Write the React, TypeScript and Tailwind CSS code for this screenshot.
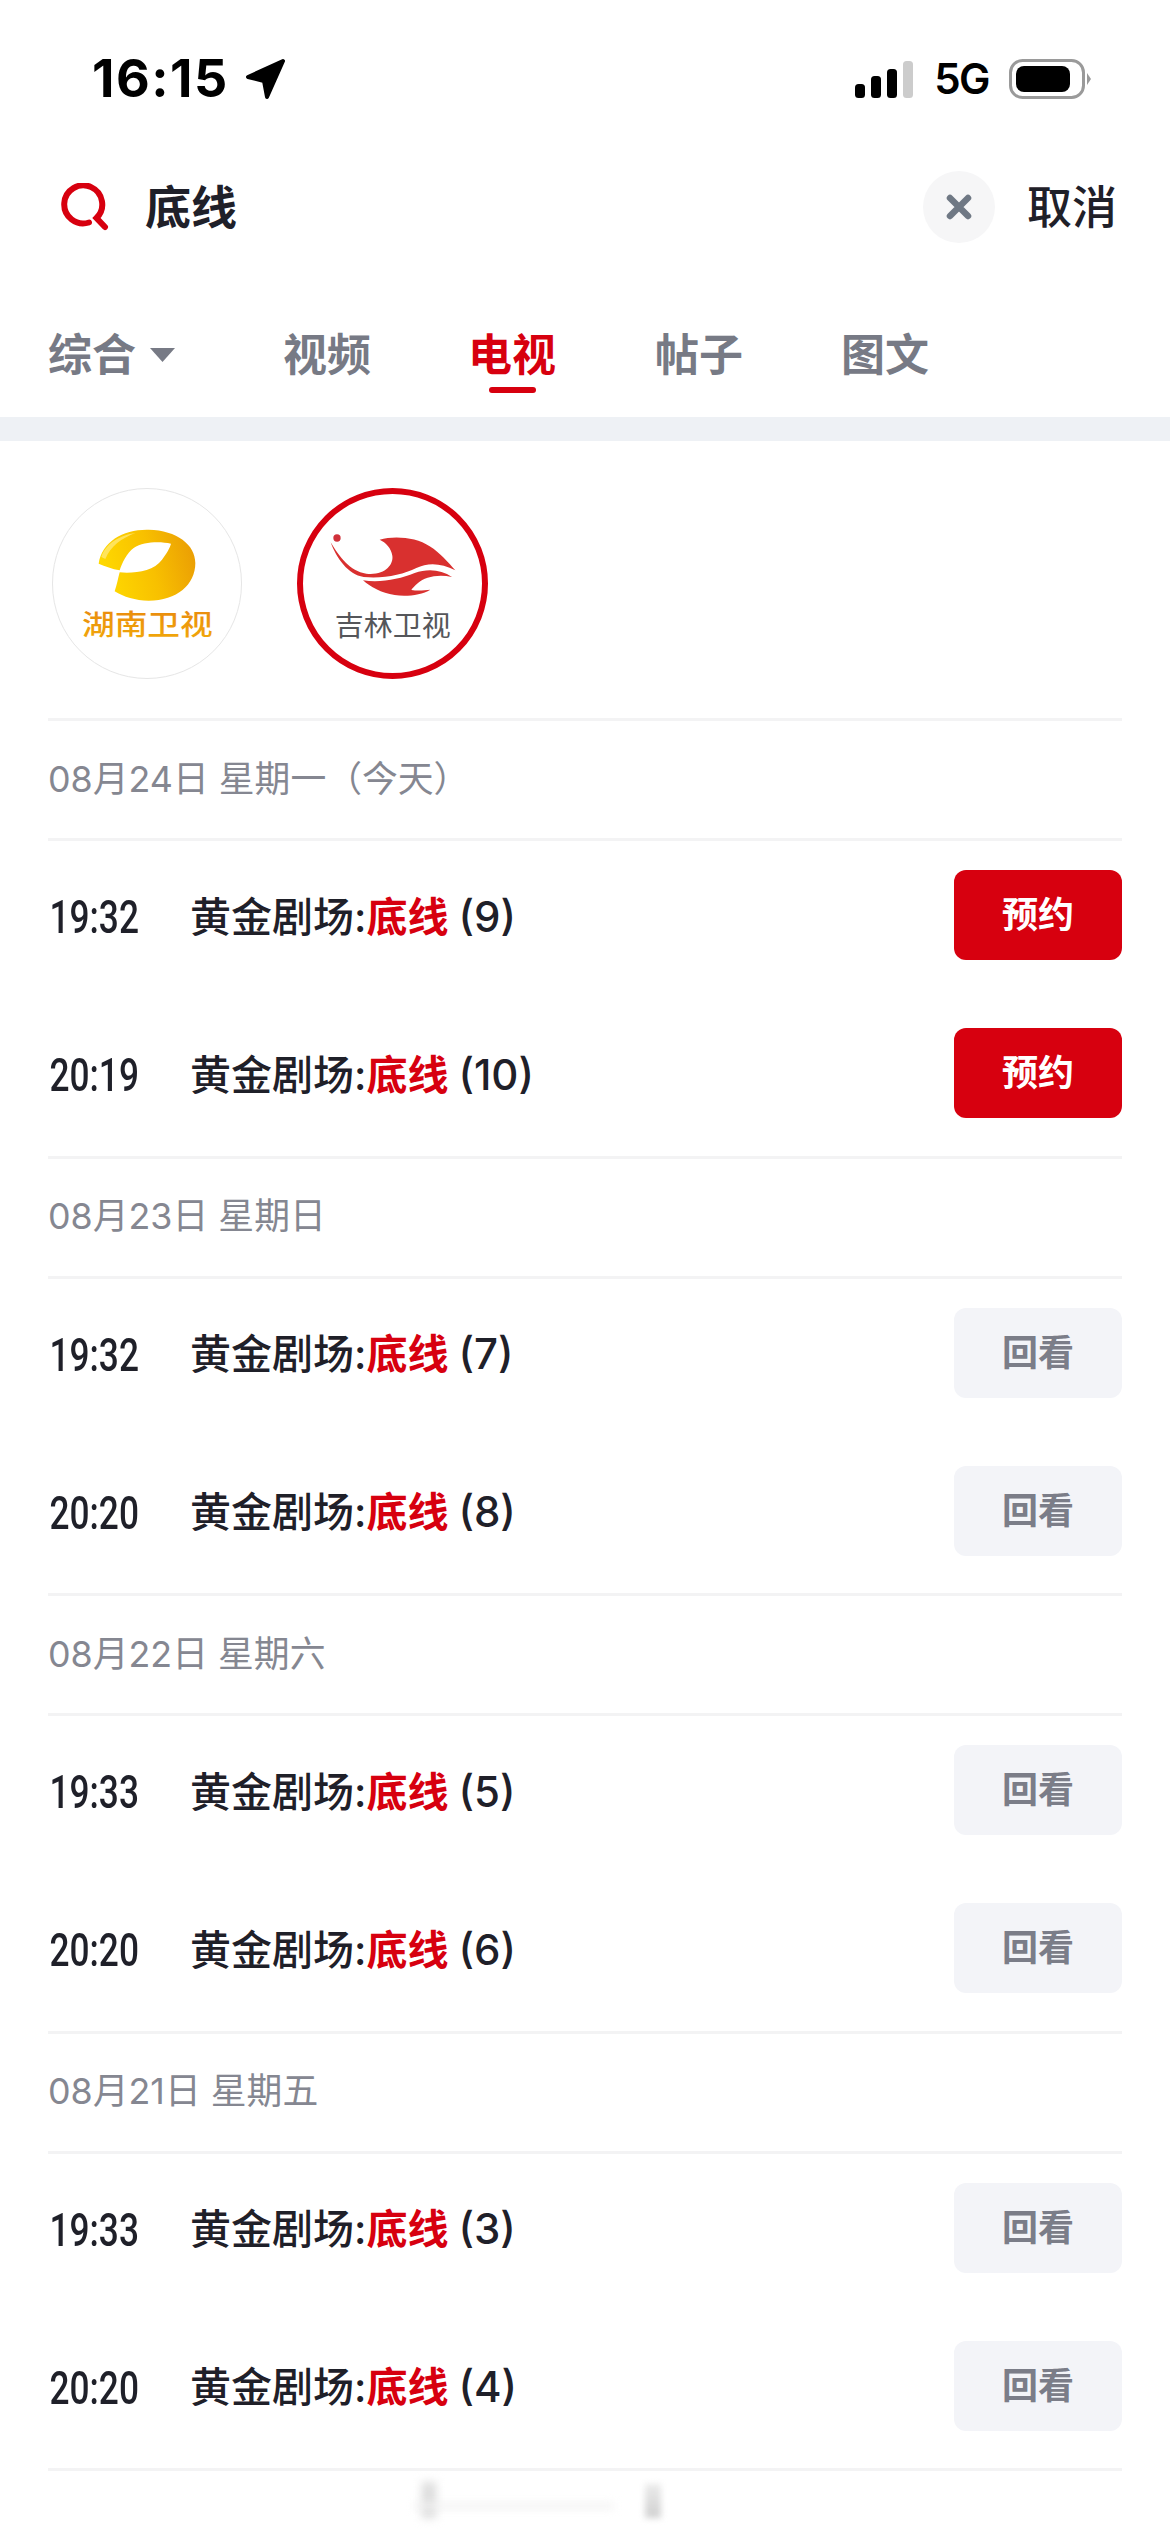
import React from "react";

const RED = "#d7000f";

function HunanLogo() {
  return (
    <svg viewBox="98 58 564 567" className="block w-full h-full">
      <defs>
        <linearGradient id="hn" x1="0" y1="0.6" x2="1" y2="0.4">
          <stop offset="0" stopColor="#ffdb00" />
          <stop offset="0.55" stopColor="#f8c000" />
          <stop offset="1" stopColor="#eb9f04" />
        </linearGradient>
        <linearGradient id="hnt" x1="0" y1="0" x2="0" y2="1">
          <stop offset="0" stopColor="#e8860f" />
          <stop offset="1" stopColor="#f2ab08" />
        </linearGradient>
      </defs>
      <path
        fill="url(#hn)"
        d="M235 282C245 215 310 178 385 180C470 182 525 225 525 280C525 345 470 393 385 393C345 393 310 382 283 365C290 345 293 325 298 308C340 312 400 305 425 270C440 250 448 235 452 222C420 215 370 215 340 235C320 250 305 280 298 302C275 298 255 290 235 282Z"
      />
      <path fill="#ffe97a" opacity="0.75" d="M243 262C255 222 300 196 345 190C305 205 270 230 255 268Z" />
      <text
        x="185"
        y="497"
        fontSize="84"
        fontWeight="500"
        fill="url(#hnt)"
        textLength="392"
        lengthAdjust="spacingAndGlyphs"
        className="font-['Noto_Sans_CJK_SC',sans-serif]"
      >
        湖南卫视
      </text>
    </svg>
  );
}

function JilinLogo() {
  return (
    <svg viewBox="850 73 537 537" className="block w-full h-full">
      <circle cx="952" cy="205" r="11" fill="#d0313a" />
      <path
        fill="#d9302f"
        d="M933 218C960 262 990 305 1040 312C1095 318 1122 285 1118 258C1115 235 1098 218 1080 210C1125 198 1190 203 1230 230C1262 250 1285 278 1307 302C1265 280 1225 278 1190 295C1150 315 1090 328 1032 322C985 315 950 265 933 218Z"
      />
      <path
        fill="#d9302f"
        d="M1030 332C1085 340 1140 328 1185 310C1225 296 1265 300 1297 322C1255 312 1215 322 1195 340C1185 349 1178 355 1175 361C1195 364 1215 362 1232 360C1205 376 1160 382 1125 376C1085 370 1052 352 1030 332Z"
      />
      <text
        x="945"
        y="498"
        fontSize="84"
        fontWeight="400"
        fill="#55565a"
        textLength="348"
        lengthAdjust="spacingAndGlyphs"
        className="font-['Noto_Sans_CJK_SC',sans-serif]"
      >
        吉林卫视
      </text>
    </svg>
  );
}

function StatusBar() {
  return (
    <div className="h-[156px] pt-[2px] flex items-center justify-between pl-[92px] pr-[79px]">
      <div className="flex items-center gap-[16px]">
        <span className="text-[52px] leading-none font-bold text-black tracking-[1.5px] font-['Inter',sans-serif]">16:15</span>
        <svg width="42" height="42" viewBox="0 0 42 42">
          <path d="M38 3 L3 19 L19 23 L22 39 Z" fill="#000" stroke="#000" strokeWidth="4" strokeLinejoin="round" />
        </svg>
      </div>
      <div className="flex items-center">
        <svg width="58" height="37" viewBox="0 0 58 37">
          <rect x="0" y="23" width="10" height="14" rx="3.5" fill="#000" />
          <rect x="16" y="15" width="10" height="22" rx="3.5" fill="#000" />
          <rect x="32" y="8" width="10" height="29" rx="3.5" fill="#000" />
          <rect x="48" y="0" width="10" height="37" rx="3.5" fill="#cccccc" />
        </svg>
        <span className="ml-[21px] text-[42px] leading-none font-semibold tracking-[-1.5px] text-black font-['Inter',sans-serif]">5G</span>
        <svg className="ml-[20px]" width="82" height="40" viewBox="0 0 82 40">
          <rect x="1.5" y="1.5" width="73" height="37" rx="12" fill="#fff" stroke="#9a9a9a" strokeWidth="3" />
          <rect x="7" y="7" width="54" height="26" rx="8" fill="#000" />
          <path d="M78 14 L82 20 L78 26 Z" fill="#9a9a9a" />
        </svg>
      </div>
    </div>
  );
}

function SearchBar() {
  return (
    <div className="h-[102px] flex items-center pl-[61px] pr-[53px]">
      <svg width="48" height="48" viewBox="0 0 48 48" fill="none">
        <path d="M28 39.5 A19 19 0 1 1 35.5 35 L44 44" stroke={RED} strokeWidth="6" strokeLinecap="round" />
      </svg>
      <span className="ml-[36px] text-[46px] leading-none font-bold text-[#1f2029]">底线</span>
      <div className="ml-auto w-[72px] h-[72px] rounded-full bg-[#f6f6f7] flex items-center justify-center">
        <svg width="26" height="26" viewBox="0 0 26 26">
          <path d="M4 4 L22 22 M22 4 L4 22" stroke="#6f7884" strokeWidth="6.5" strokeLinecap="round" />
        </svg>
      </div>
      <span className="ml-[32px] text-[45px] leading-none font-medium text-[#1f2029]">取消</span>
    </div>
  );
}

function Tab({ label, active, className }: { label: string; active?: boolean; className: string }) {
  return (
    <div className={`flex flex-col items-center ${className}`}>
      <span className={`text-[44px] leading-[44px] font-bold ${active ? "text-[#d7000f]" : "text-[#777a85]"}`}>{label}</span>
      {active && <div className="mt-[10px] w-[47px] h-[6px] rounded-full bg-[#d7000f]" />}
    </div>
  );
}

function Tabs() {
  return (
    <div className="h-[159px] pt-[75px] pl-[48px] flex items-start">
      <div className="flex items-center">
        <span className="text-[44px] leading-[44px] font-bold text-[#777a85]">综合</span>
        <svg className="ml-[13px]" width="27" height="14" viewBox="0 0 27 14">
          <path d="M1 0 H26 L13.5 14 Z" fill="#777a85" />
        </svg>
      </div>
      <Tab label="视频" className="ml-[107px]" />
      <Tab label="电视" active className="ml-[97px]" />
      <Tab label="帖子" className="ml-[99px]" />
      <Tab label="图文" className="ml-[98px]" />
    </div>
  );
}

function ActionButton({ kind }: { kind: "book" | "replay" }) {
  const book = kind === "book";
  return (
    <div
      className={`w-[168px] h-[90px] rounded-[12px] flex items-center justify-center text-[36px] leading-none font-bold ${
        book ? "bg-[#d7000f] text-white" : "bg-[#f3f4f8] text-[#7b7d88]"
      }`}
    >
      {book ? "预约" : "回看"}
    </div>
  );
}

function Row({ time, ep, kind }: { time: string; ep: string; kind: "book" | "replay" }) {
  return (
    <div className="flex items-center">
      <div className="w-[142px] shrink-0 pt-[3px]">
        <span className="inline-block origin-left scale-x-[0.75] pl-[2px] text-[47px] leading-none font-medium text-[#1f2029] font-['Roboto',sans-serif]">{time}</span>
      </div>
      <span className="pt-[3px] text-[41px] leading-none font-medium text-[#1f2029] whitespace-pre">
        黄金剧场:<span className="font-bold text-[#d7000f]">底线</span>
        <span className="text-[42px] ml-[10px]">({ep})</span>
      </span>
      <div className="ml-auto">
        <ActionButton kind={kind} />
      </div>
    </div>
  );
}

const groups: { date: string; rows: { time: string; ep: string; kind: "book" | "replay" }[] }[] = [
  { date: "08月24日 星期一（今天）", rows: [{ time: "19:32", ep: "9", kind: "book" }, { time: "20:19", ep: "10", kind: "book" }] },
  { date: "08月23日 星期日", rows: [{ time: "19:32", ep: "7", kind: "replay" }, { time: "20:20", ep: "8", kind: "replay" }] },
  { date: "08月22日 星期六", rows: [{ time: "19:33", ep: "5", kind: "replay" }, { time: "20:20", ep: "6", kind: "replay" }] },
  { date: "08月21日 星期五", rows: [{ time: "19:33", ep: "3", kind: "replay" }, { time: "20:20", ep: "4", kind: "replay" }] },
];

export default function App() {
  return (
    <div className="relative w-[1170px] h-[2532px] overflow-hidden bg-white font-['Inter','Noto_Sans_CJK_SC',sans-serif]">
      <StatusBar />
      <SearchBar />
      <Tabs />
      <div className="h-[24px] bg-[#eef1f5]" />
      <div className="pt-[47px] pb-[39px] pl-[52px] flex gap-[55px]">
        <div className="w-[190px] h-[191px] rounded-full border border-[#e6e6e6] overflow-hidden">
          <HunanLogo />
        </div>
        <div className="w-[191px] h-[191px] rounded-full border-[6px] border-[#d7000f] overflow-hidden">
          <JilinLogo />
        </div>
      </div>
      <div className="mx-[48px] border-b-[3px] border-[#f3f3f4]">
        {groups.map((g) => (
          <div key={g.date}>
            <div className="h-[120px] border-t-[3px] border-[#f3f3f4] flex items-center text-[35.8px] leading-none text-[#858791] whitespace-pre">
              {g.date}
            </div>
            <div className="h-[317.5px] border-t-[3px] border-[#f3f3f4] pt-[29px] flex flex-col gap-[68px]">
              {g.rows.map((r) => (
                <Row key={r.time} {...r} />
              ))}
            </div>
          </div>
        ))}
      </div>
      <div className="absolute left-[422px] top-[2482px] w-[14px] h-[36px] bg-[#dcdcdc] blur-[5px]" />
      <div className="absolute left-[414px] top-[2503px] w-[200px] h-[6px] bg-[#f2f2f2] blur-[4px]" />
      <div className="absolute left-[645px] top-[2484px] w-[16px] h-[34px] bg-gradient-to-b from-[#ebebeb] to-[#d0d0d0] blur-[3px]" />
    </div>
  );
}
